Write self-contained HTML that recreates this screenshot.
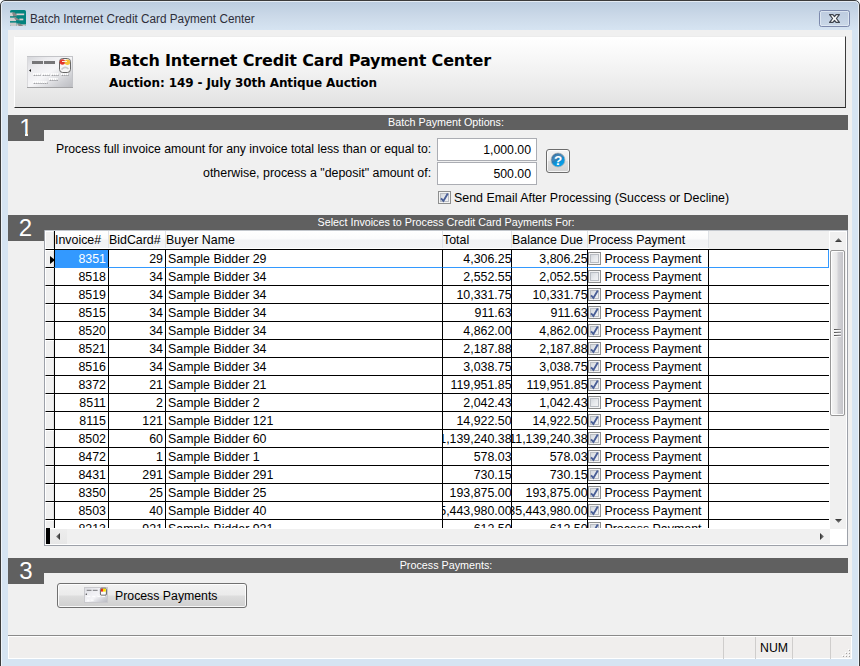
<!DOCTYPE html>
<html><head><meta charset="utf-8"><title>Batch Internet Credit Card Payment Center</title>
<style>
*{box-sizing:border-box;margin:0;padding:0}
html,body{width:860px;height:666px;overflow:hidden;background:#fff;font-family:"Liberation Sans",sans-serif;font-size:12.3px;color:#000}
#win{position:absolute;left:0;top:0;width:860px;height:674px;border-radius:5px 5px 0 0;background:linear-gradient(#bbccde 0,#bccde0 2px,#cbd9e8 16px,#d6e4f2 30px,#d6e4f2 60px);overflow:hidden}
#win:before{content:"";position:absolute;left:0;top:0;right:0;bottom:0;border:1px solid #3b3b3b;border-radius:5px 5px 0 0;pointer-events:none}
#win:after{content:"";position:absolute;left:1px;top:1px;right:1px;bottom:0;border:1px solid rgba(255,255,255,.6);border-radius:4px 4px 0 0;pointer-events:none}
#ticon{position:absolute;left:10px;top:10px;width:16px;height:16px}
#ttext{position:absolute;left:30px;top:12px;font-size:12.5px;line-height:15px;white-space:nowrap;color:#2e2e3a;transform:scaleX(.94);transform-origin:0 0}
#close{position:absolute;left:819px;top:10px;width:31px;height:17px;border:1px solid #7d8aad;border-radius:2.5px;background:linear-gradient(#bdcbdf,#c3d1e3 50%,#cad8e8);box-shadow:inset 0 0 0 1px rgba(228,236,246,.75)}
#close svg{position:absolute;left:9px;top:3px;width:11px;height:9px}
#client{position:absolute;left:8px;top:30px;width:844px;height:629px;background:#f0f0f0}
#hdr{position:absolute;left:6px;top:6px;width:832px;height:72px;background:linear-gradient(#ffffff 0,#fdfdfd 8%,#f5f5f5 38%,#ebebeb 72%,#e1e1e1 100%);border-right:1px solid #3c3c3c;border-bottom:1px solid #2a2a2a;border-top:1px solid #ececec;border-left:1px solid #fff}
#h1{position:absolute;left:94px;top:14px;font-family:"DejaVu Sans","Liberation Sans",sans-serif;font-weight:bold;font-size:16px;line-height:20px;white-space:nowrap;letter-spacing:-.17px}
#h2{position:absolute;left:94px;top:38px;letter-spacing:-.1px;font-family:"DejaVu Sans","Liberation Sans",sans-serif;font-weight:bold;font-size:12px;line-height:16px;white-space:nowrap}
#card{position:absolute;left:12px;top:19px;width:46px;height:32px}
.bar{position:absolute;left:0;width:840px;padding-left:36px;height:15px;background:#606060;color:#fff;font-size:10.75px;line-height:15px;text-align:center;white-space:nowrap}
.num{position:absolute;left:0;width:36px;height:26px;background:#606060;color:#fff;font-size:24px;line-height:26px;text-align:center}
.num i{position:absolute;top:17px;width:6px;height:5px;background:#606060}
.lbl{position:absolute;white-space:nowrap;font-size:12.25px;line-height:15px;margin-top:1px}
.inp{position:absolute;left:429px;width:100px;height:23px;background:#fff;border:1px solid #abadb3;text-align:right;padding-right:5px;font-size:12.3px;line-height:23px}
#help{position:absolute;left:538px;top:119px;width:24px;height:24px;border:1px solid #6c6c6c;border-radius:3px;background:linear-gradient(#f4f4f4,#ececec 48%,#dedede 52%,#d2d2d2);box-shadow:inset 0 0 0 1px rgba(255,255,255,.8)}
#help svg{position:absolute;left:3px;top:2px;width:16px;height:16px}
.cb{display:inline-block;position:absolute;width:13px;height:13px;border:1px solid #8e8f8f;background:linear-gradient(135deg,#cbd0d6,#e9ebee 55%,#f8f8f9);box-shadow:inset 0 0 0 1px #f4f4f4, inset 0 0 0 2px #b9bdc3}
.cb svg{position:absolute;left:-1px;top:-1px;width:13px;height:13px}
.cb svg path{fill:none;stroke:#4a5f97;stroke-width:1.9}
#grid{position:absolute;left:36px;top:200px;width:804px;height:316px;background:#fff;border-left:1px solid #9da1a9;border-bottom:1px solid #9da1a9;border-right:1px solid #9da1a9;overflow:hidden;font-size:12.4px}
#gin{position:absolute;left:0;top:0;width:784px;height:298px;overflow:hidden;background:#f0f0f0;border-top:1px solid #fff}
.hc{position:absolute;top:0;height:17px;box-shadow:0 1px 0 #fff;background:linear-gradient(#fff,#fbfbfc 45%,#f1f2f4 55%,#f2f3f5);border-right:1px solid #dfe2e6;line-height:19px;white-space:nowrap;padding-left:0;overflow:hidden}
.row{position:absolute;left:0;width:784px;height:18px;margin-top:-1px}
.row .ind{position:absolute;left:0;top:0;width:9px;height:18px;background:#f0f0f0;border-top:1px solid #000;border-left:1px solid #fff;box-shadow:inset 0 1px 0 #fff,inset -1px 0 0 #e2e2e2}
.row .ind i{position:absolute;left:4px;top:6px;width:0;height:0;border-left:5px solid #000;border-top:4.5px solid transparent;border-bottom:4.5px solid transparent}
.row .c{position:absolute;top:0;height:18px;border-left:1px solid #000;border-top:1px solid #000;background:#fff;line-height:17px;padding-top:1px;white-space:nowrap;overflow:hidden}
.row .c b{font-weight:normal}
.c1{left:9px;width:54px;text-align:right;padding-right:2px}
.c2{left:63px;width:57px;text-align:right;padding-right:2px}
.c3{left:120px;width:277px;padding-left:2px}
.c4{left:397px;width:69px;text-align:right;direction:rtl}
.c5{left:466px;width:76px;text-align:right;direction:rtl}
.c4 b,.c5 b{position:relative;left:.6px}
.c6{left:542px;width:121px;padding-left:16.4px}
.c6 .cb{left:0;top:2px}
.c7{left:663px;width:121px}
.row.sel .c1{background:#3399ff;color:#fff}
.row.sel + .row .c{border-top-color:#3399ff}
.row.sel + .row .c1{border-top-color:#3399ff}
.row.sel .c7{border-right:1px solid #3399ff}
#vsb{position:absolute;left:784px;top:1px;width:17px;height:298px;background:#f0f0f0;border-left:1px solid #fff;border-top:1px solid #fff}
#thumb{position:absolute;left:0;top:18px;width:15px;height:166px;border:1px solid #979797;border-radius:2px;background:linear-gradient(90deg,#f4f4f4 0,#e7e7e8 47%,#d5d5d9 53%,#c0c0c5 100%);box-shadow:inset 0 0 0 1px rgba(255,255,255,.9)}
#hsb{position:absolute;left:0;top:298px;width:785px;height:17px;background:#f0f0f0;border-top:1px solid #fff;border-bottom:1px solid #fff}
#btn{position:absolute;left:49px;top:553px;width:190px;height:25px;border:1px solid #707070;border-radius:3px;background:linear-gradient(#f2f2f2,#ebebeb 48%,#dddddd 52%,#cfcfcf);box-shadow:inset 0 0 0 1px rgba(255,255,255,.85)}
#btn span{position:absolute;left:57px;top:5px;font-size:12.3px;line-height:15px;white-space:nowrap}
#btn svg{position:absolute;left:26px;top:3px;width:24px;height:16px}
#status{position:absolute;left:0;top:605px;width:844px;height:24px;border-top:1px solid #8a8a8a}
#status .in{position:absolute;left:0;top:0;width:844px;height:23px;background:#f0eeed;border:1px solid #fff}
#status .sep{position:absolute;top:1px;width:1px;height:22px;background:#cfcdcc}
</style></head><body>
<div id="win">
<svg id="ticon" viewBox="0 0 16 16"><defs><clipPath id="tc"><rect x="0" y="0" width="16" height="16" rx="1.6"/></clipPath></defs><g clip-path="url(#tc)"><rect width="16" height="16" fill="#03837f"/><rect x="0" y="2.5" width="3.2" height="3.7" fill="#d2d0d0"/><rect x="6.3" y="3.5" width="7.9" height="1.7" fill="#dccfd0"/><path d="M2 2.5 L5 2.5 L7.2 6.2 L3.2 6.2 Z" fill="#868686"/><rect x="0" y="7.6" width="6" height="3.5" fill="#d0cece"/><rect x="9.3" y="8.6" width="4" height="1.7" fill="#dccfd0"/><path d="M3.8 7.6 L6.2 7.6 L10.2 10.3 L5.8 10.3 Z" fill="#868686"/><rect x="0" y="12.6" width="6.4" height="3.4" fill="#c9c9c9"/><rect x="6.4" y="14.4" width="9.6" height="1.6" fill="#d4cbcb"/><path d="M6.4 14.4H8.6L8 13.6H6.4Z" fill="#c9c9c9"/><path d="M7.8 13.4 L10 13.4 L13.4 16 L8.6 16 Z" fill="#868686"/></g></svg>
<div id="ttext">Batch Internet Credit Card Payment Center</div>
<div id="close"><svg viewBox="0 0 11 9"><path d="M.6 .6 L3.9 .6 L5.5 2.5 L7.1 .6 L10.4 .6 L7.4 4.5 L10.4 8.4 L7.1 8.4 L5.5 6.5 L3.9 8.4 L.6 8.4 L3.6 4.5 Z" fill="#fbfbfb" stroke="#3f444e" stroke-width="1.2" stroke-linejoin="round"/></svg></div>
<div id="client">
 <div id="hdr">
  <svg id="card" viewBox="0 0 46 32"><defs><linearGradient id="cg" x1="0" y1="0" x2="1" y2="1"><stop offset="0" stop-color="#d6d7db"/><stop offset=".25" stop-color="#ececef"/><stop offset=".5" stop-color="#f6f6f8"/><stop offset=".8" stop-color="#cfd0d4"/><stop offset="1" stop-color="#bbbcc1"/></linearGradient></defs><rect x=".5" y=".5" width="45" height="31" fill="url(#cg)" stroke="#c3c4c8"/><path d="M0 31.5H46" stroke="#a2a2a4"/><path d="M.5 1V31" stroke="#d9d9dc"/><rect x="5" y="5" width="11" height="3" fill="#767678"/><rect x="17" y="5" width="11" height="3" fill="#767678"/><path d="M2 14.5 L4 13 L4 16 Z" fill="#111"/><rect x="32.5" y="2.5" width="11" height="14" rx="3.2" fill="#f6f6f6" stroke="#666"/><path d="M34.5 13.5 Q38 9.5 41.5 13" fill="none" stroke="#c9c9cc" stroke-width="1.6"/><circle cx="35.4" cy="6" r="2.7" fill="#e3352b"/><circle cx="40.4" cy="6.2" r="2.7" fill="#f4c136"/><rect x="35" y="5" width="5" height="1" fill="#fbeee0"/><g stroke="#85868b" stroke-width="1.6" stroke-dasharray="1.3 .6" fill="none"><path d="M6.6 19.3H14M15.6 19.3H23M24.6 19.3H32M34.6 19.3H41.5M22.6 24H31M6.6 27.3H20.5"/></g><g stroke="#fff" stroke-width="2" stroke-dasharray="1.5 .4" fill="none"><path d="M6 18.3H13.6M15 18.3H22.7M24 18.3H31.7M34 18.3H41M22 23H30.7M6 26.3H20"/></g></svg>
  <div id="h1">Batch Internet Credit Card Payment Center</div>
  <div id="h2">Auction: 149 - July 30th Antique Auction</div>
 </div>

 <div class="bar" style="top:85px">Batch Payment Options:</div>
 <div class="num" style="top:85px">1<i style="left:11px"></i><i style="left:20.4px"></i></div>
 <div class="lbl" style="left:48px;top:111px">Process full invoice amount for any invoice total less than or equal to:</div>
 <div class="lbl" style="left:195px;top:135px;font-size:12.42px">otherwise, process a "deposit" amount of:</div>
 <div class="inp" style="top:108px">1,000.00</div>
 <div class="inp" style="top:132px">500.00</div>
 <div id="help"><svg viewBox="0 0 16 16"><defs><linearGradient id="hg" x1=".2" y1="0" x2=".8" y2="1"><stop offset="0" stop-color="#1f5f96"/><stop offset=".45" stop-color="#2d7fb8"/><stop offset=".55" stop-color="#0a8fd6"/><stop offset="1" stop-color="#07a6f0"/></linearGradient></defs><circle cx="8" cy="8" r="7" fill="url(#hg)" stroke="#b9b3ad" stroke-width=".7"/><path d="M1.6 9.5 Q5 8.8 8 6.2 Q11 3.8 14 4.2 A7 7 0 0 0 1.6 9.5Z" fill="#fff" opacity=".12"/><text x="8" y="13.1" font-family="Liberation Sans, sans-serif" font-weight="bold" font-size="13.5" fill="#fff" text-anchor="middle">?</text></svg></div>
 <span class="cb on" style="left:430px;top:161px"><svg viewBox="0 0 13 13"><path d="M3 7.3 L5.4 9.9 L9.8 2.6"/></svg></span>
 <div class="lbl" style="left:446px;top:160px;font-size:12.42px">Send Email After Processing (Success or Decline)</div>

 <div class="bar" style="top:185px">Select Invoices to Process Credit Card Payments For:</div>
 <div class="num" style="top:185px;text-indent:-1px">2</div>

 <div id="grid"><div style="position:absolute;left:0;top:0;width:803px;height:1px;background:#c3c7cd;z-index:5"></div>
  <div id="gin">
   <div class="hc" style="left:0;width:9px;border-right:1px solid #dcdcdc;border-left:1px solid #fff;border-top:1px solid #fff;background:#f0f0f0"></div>
   <div style="position:absolute;left:9px;top:0;width:1px;height:19px;background:#000"></div>
   <div class="hc" style="left:10px;width:54px">Invoice#</div>
   <div class="hc" style="left:64px;width:57px">BidCard#</div>
   <div class="hc" style="left:121px;width:277px">Buyer Name</div>
   <div class="hc" style="left:398px;width:69px">Total</div>
   <div class="hc" style="left:467px;width:76px">Balance Due</div>
   <div class="hc" style="left:543px;width:121px">Process Payment</div>
<div class="row sel" style="top:19px"><div class="ind"><i></i></div><div class="c c1"><b>8351</b></div><div class="c c2"><b>29</b></div><div class="c c3"><b>Sample Bidder 29</b></div><div class="c c4"><b>4,306.25</b></div><div class="c c5"><b>3,806.25</b></div><div class="c c6"><span class="cb"></span><b>Process Payment</b></div><div class="c c7"></div></div>
<div class="row" style="top:37px"><div class="ind"></div><div class="c c1"><b>8518</b></div><div class="c c2"><b>34</b></div><div class="c c3"><b>Sample Bidder 34</b></div><div class="c c4"><b>2,552.55</b></div><div class="c c5"><b>2,052.55</b></div><div class="c c6"><span class="cb"></span><b>Process Payment</b></div><div class="c c7"></div></div>
<div class="row" style="top:55px"><div class="ind"></div><div class="c c1"><b>8519</b></div><div class="c c2"><b>34</b></div><div class="c c3"><b>Sample Bidder 34</b></div><div class="c c4"><b>10,331.75</b></div><div class="c c5"><b>10,331.75</b></div><div class="c c6"><span class="cb on"><svg viewBox="0 0 13 13"><path d="M3 7.3 L5.4 9.9 L9.8 2.6" /></svg></span><b>Process Payment</b></div><div class="c c7"></div></div>
<div class="row" style="top:73px"><div class="ind"></div><div class="c c1"><b>8515</b></div><div class="c c2"><b>34</b></div><div class="c c3"><b>Sample Bidder 34</b></div><div class="c c4"><b>911.63</b></div><div class="c c5"><b>911.63</b></div><div class="c c6"><span class="cb on"><svg viewBox="0 0 13 13"><path d="M3 7.3 L5.4 9.9 L9.8 2.6" /></svg></span><b>Process Payment</b></div><div class="c c7"></div></div>
<div class="row" style="top:91px"><div class="ind"></div><div class="c c1"><b>8520</b></div><div class="c c2"><b>34</b></div><div class="c c3"><b>Sample Bidder 34</b></div><div class="c c4"><b>4,862.00</b></div><div class="c c5"><b>4,862.00</b></div><div class="c c6"><span class="cb on"><svg viewBox="0 0 13 13"><path d="M3 7.3 L5.4 9.9 L9.8 2.6" /></svg></span><b>Process Payment</b></div><div class="c c7"></div></div>
<div class="row" style="top:109px"><div class="ind"></div><div class="c c1"><b>8521</b></div><div class="c c2"><b>34</b></div><div class="c c3"><b>Sample Bidder 34</b></div><div class="c c4"><b>2,187.88</b></div><div class="c c5"><b>2,187.88</b></div><div class="c c6"><span class="cb on"><svg viewBox="0 0 13 13"><path d="M3 7.3 L5.4 9.9 L9.8 2.6" /></svg></span><b>Process Payment</b></div><div class="c c7"></div></div>
<div class="row" style="top:127px"><div class="ind"></div><div class="c c1"><b>8516</b></div><div class="c c2"><b>34</b></div><div class="c c3"><b>Sample Bidder 34</b></div><div class="c c4"><b>3,038.75</b></div><div class="c c5"><b>3,038.75</b></div><div class="c c6"><span class="cb on"><svg viewBox="0 0 13 13"><path d="M3 7.3 L5.4 9.9 L9.8 2.6" /></svg></span><b>Process Payment</b></div><div class="c c7"></div></div>
<div class="row" style="top:145px"><div class="ind"></div><div class="c c1"><b>8372</b></div><div class="c c2"><b>21</b></div><div class="c c3"><b>Sample Bidder 21</b></div><div class="c c4"><b>119,951.85</b></div><div class="c c5"><b>119,951.85</b></div><div class="c c6"><span class="cb on"><svg viewBox="0 0 13 13"><path d="M3 7.3 L5.4 9.9 L9.8 2.6" /></svg></span><b>Process Payment</b></div><div class="c c7"></div></div>
<div class="row" style="top:163px"><div class="ind"></div><div class="c c1"><b>8511</b></div><div class="c c2"><b>2</b></div><div class="c c3"><b>Sample Bidder 2</b></div><div class="c c4"><b>2,042.43</b></div><div class="c c5"><b>1,042.43</b></div><div class="c c6"><span class="cb"></span><b>Process Payment</b></div><div class="c c7"></div></div>
<div class="row" style="top:181px"><div class="ind"></div><div class="c c1"><b>8115</b></div><div class="c c2"><b>121</b></div><div class="c c3"><b>Sample Bidder 121</b></div><div class="c c4"><b>14,922.50</b></div><div class="c c5"><b>14,922.50</b></div><div class="c c6"><span class="cb on"><svg viewBox="0 0 13 13"><path d="M3 7.3 L5.4 9.9 L9.8 2.6" /></svg></span><b>Process Payment</b></div><div class="c c7"></div></div>
<div class="row" style="top:199px"><div class="ind"></div><div class="c c1"><b>8502</b></div><div class="c c2"><b>60</b></div><div class="c c3"><b>Sample Bidder 60</b></div><div class="c c4"><b>1,139,240.38</b></div><div class="c c5"><b>11,139,240.38</b></div><div class="c c6"><span class="cb on"><svg viewBox="0 0 13 13"><path d="M3 7.3 L5.4 9.9 L9.8 2.6" /></svg></span><b>Process Payment</b></div><div class="c c7"></div></div>
<div class="row" style="top:217px"><div class="ind"></div><div class="c c1"><b>8472</b></div><div class="c c2"><b>1</b></div><div class="c c3"><b>Sample Bidder 1</b></div><div class="c c4"><b>578.03</b></div><div class="c c5"><b>578.03</b></div><div class="c c6"><span class="cb on"><svg viewBox="0 0 13 13"><path d="M3 7.3 L5.4 9.9 L9.8 2.6" /></svg></span><b>Process Payment</b></div><div class="c c7"></div></div>
<div class="row" style="top:235px"><div class="ind"></div><div class="c c1"><b>8431</b></div><div class="c c2"><b>291</b></div><div class="c c3"><b>Sample Bidder 291</b></div><div class="c c4"><b>730.15</b></div><div class="c c5"><b>730.15</b></div><div class="c c6"><span class="cb on"><svg viewBox="0 0 13 13"><path d="M3 7.3 L5.4 9.9 L9.8 2.6" /></svg></span><b>Process Payment</b></div><div class="c c7"></div></div>
<div class="row" style="top:253px"><div class="ind"></div><div class="c c1"><b>8350</b></div><div class="c c2"><b>25</b></div><div class="c c3"><b>Sample Bidder 25</b></div><div class="c c4"><b>193,875.00</b></div><div class="c c5"><b>193,875.00</b></div><div class="c c6"><span class="cb on"><svg viewBox="0 0 13 13"><path d="M3 7.3 L5.4 9.9 L9.8 2.6" /></svg></span><b>Process Payment</b></div><div class="c c7"></div></div>
<div class="row" style="top:271px"><div class="ind"></div><div class="c c1"><b>8503</b></div><div class="c c2"><b>40</b></div><div class="c c3"><b>Sample Bidder 40</b></div><div class="c c4"><b>5,443,980.00</b></div><div class="c c5"><b>35,443,980.00</b></div><div class="c c6"><span class="cb on"><svg viewBox="0 0 13 13"><path d="M3 7.3 L5.4 9.9 L9.8 2.6" /></svg></span><b>Process Payment</b></div><div class="c c7"></div></div>
<div class="row" style="top:289px"><div class="ind"></div><div class="c c1"><b>8213</b></div><div class="c c2"><b>921</b></div><div class="c c3"><b>Sample Bidder 921</b></div><div class="c c4"><b>612.50</b></div><div class="c c5"><b>612.50</b></div><div class="c c6"><span class="cb on"><svg viewBox="0 0 13 13"><path d="M3 7.3 L5.4 9.9 L9.8 2.6" /></svg></span><b>Process Payment</b></div><div class="c c7"></div></div>
  </div>
  <div id="vsb">
   <svg style="position:absolute;left:5px;top:6px" width="7" height="4" viewBox="0 0 7 4"><defs><linearGradient id="au" x1="0" y1="0" x2="0" y2="1"><stop offset="0" stop-color="#8c8c8c"/><stop offset="1" stop-color="#2e2e2e"/></linearGradient></defs><path d="M0 4 L3.5 0 L7 4 Z" fill="url(#au)"/></svg>
   <div id="thumb"><svg style="position:absolute;left:3px;top:78px" width="7" height="8" viewBox="0 0 7 8"><defs><linearGradient id="gr" x1="0" x2="1"><stop offset="0" stop-color="#4e4e4e"/><stop offset="1" stop-color="#9a9a9c"/></linearGradient></defs><path d="M0 .5H7M0 3.5H7M0 6.5H7" stroke="url(#gr)"/><path d="M0 1.5H7M0 4.5H7M0 7.5H7" stroke="#fff" opacity=".85"/></svg></div>
   <svg style="position:absolute;left:5px;top:287px" width="7" height="4" viewBox="0 0 7 4"><defs><linearGradient id="ad" x1="0" y1="0" x2="0" y2="1"><stop offset="0" stop-color="#2e2e2e"/><stop offset="1" stop-color="#8c8c8c"/></linearGradient></defs><path d="M0 0 L3.5 4 L7 0 Z" fill="url(#ad)"/></svg>
  </div>
  <div id="hsb">
   <div style="position:absolute;left:1px;top:-1px;width:4px;height:16px;background:#000"></div><div style="position:absolute;left:5px;top:0;width:17px;height:15px;background:linear-gradient(#ededed,#e7e7e7)"></div>
   <svg style="position:absolute;left:11px;top:4px" width="4" height="7" viewBox="0 0 4 7"><defs><linearGradient id="al" x1="0" y1="0" x2="1" y2="0"><stop offset="0" stop-color="#8c8c8c"/><stop offset="1" stop-color="#2e2e2e"/></linearGradient></defs><path d="M4 0 L0 3.5 L4 7 Z" fill="url(#al)"/></svg>
   <svg style="position:absolute;left:775px;top:4px" width="4" height="7" viewBox="0 0 4 7"><defs><linearGradient id="ar" x1="0" y1="0" x2="1" y2="0"><stop offset="0" stop-color="#2e2e2e"/><stop offset="1" stop-color="#8c8c8c"/></linearGradient></defs><path d="M0 0 L4 3.5 L0 7 Z" fill="url(#ar)"/></svg>
  </div>
 </div>

 <div class="bar" style="top:528px">Process Payments:</div>
 <div class="num" style="top:528px">3</div>
 <div id="btn"><svg viewBox="0 0 24 16"><defs><linearGradient id="bg2" x1="0" y1="0" x2="1" y2="1"><stop offset="0" stop-color="#d9dae0"/><stop offset=".35" stop-color="#efeff3"/><stop offset=".55" stop-color="#f4f4f7"/><stop offset=".8" stop-color="#cfd0d6"/><stop offset="1" stop-color="#b7b8c0"/></linearGradient></defs><rect x=".5" y=".5" width="23" height="15" fill="url(#bg2)" stroke="#c9c9cd"/><rect x="2.7" y="2.8" width="4.8" height="1" fill="#77777b"/><rect x="8.8" y="2.8" width="4.8" height="1" fill="#77777b"/><circle cx="2.3" cy="7.2" r=".65" fill="#222"/><rect x="16.4" y="1.2" width="6" height="7" rx="1.2" fill="#fbfbfb" stroke="#555" stroke-width=".9"/><rect x="17" y="1.7" width="2" height="2.9" fill="#e8251d"/><rect x="18.9" y="1.7" width="2.9" height="2.9" fill="#ffe100"/><g fill="#fff"><rect x="2.7" y="8.8" width="3.6" height="1"/><rect x="8.2" y="8.8" width="3.1" height="1"/><rect x="13.4" y="8.8" width="3" height="1"/><rect x="17.6" y="8.8" width="3.4" height="1"/><rect x="3.1" y="12.7" width="2.1" height="1"/><rect x="7.1" y="12.7" width="2.5" height="1"/></g></svg><span>Process Payments</span></div>

 <div id="status"><div class="in"></div>
  <div class="sep" style="left:715px"></div><div class="sep" style="left:747px"></div><div class="sep" style="left:784px"></div><div class="sep" style="left:822px"></div>
  <div style="position:absolute;left:752px;top:5px;font-size:12.3px;line-height:15px">NUM</div>
  <svg style="position:absolute;left:834px;top:13px" width="8" height="8" viewBox="0 0 8 8"><g fill="#a5a3a2"><rect x="7" y="1" width="1" height="1"/><rect x="4" y="4" width="1" height="1"/><rect x="7" y="4" width="1" height="1"/><rect x="1" y="7" width="1" height="1"/><rect x="4" y="7" width="1" height="1"/><rect x="7" y="7" width="1" height="1"/></g><g fill="#fff"><rect x="6" y="0" width="1" height="1"/><rect x="3" y="3" width="1" height="1"/><rect x="6" y="3" width="1" height="1"/><rect x="0" y="6" width="1" height="1"/><rect x="3" y="6" width="1" height="1"/><rect x="6" y="6" width="1" height="1"/></g></svg>
 </div>
</div>
</div>
</body></html>
